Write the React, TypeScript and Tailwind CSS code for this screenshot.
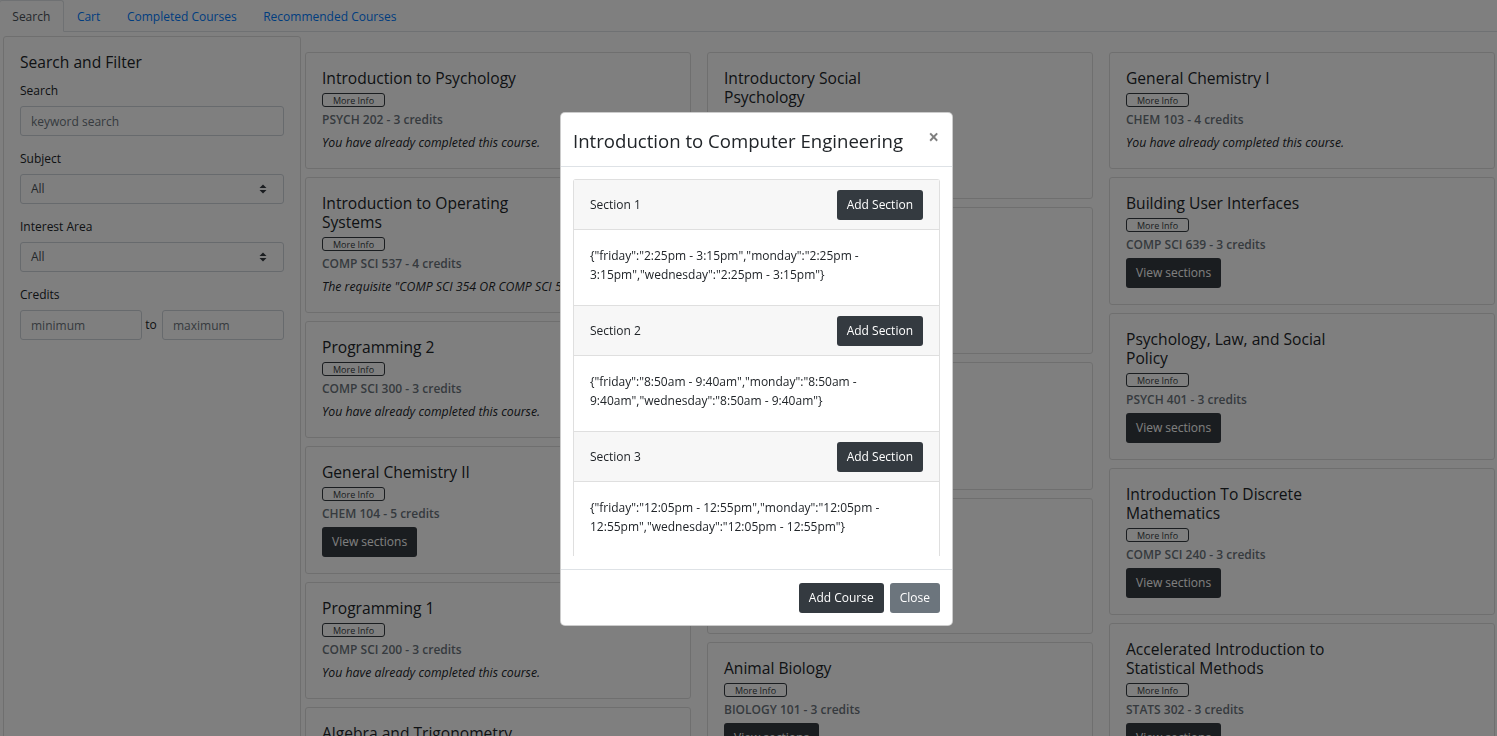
import { useState } from 'react';

type Course = {
  title: string[];
  code: string;
  note?: string;
  button?: boolean;
};

const COLUMNS: Course[][] = [
  [
    { title: ['Introduction to Psychology'], code: 'PSYCH 202 - 3 credits', note: 'You have already completed this course.' },
    {
      title: ['Introduction to Operating', 'Systems'],
      code: 'COMP SCI 537 - 4 credits',
      note: 'The requisite "COMP SCI 354 OR COMP SCI 552" has not been met.',
    },
    { title: ['Programming 2'], code: 'COMP SCI 300 - 3 credits', note: 'You have already completed this course.' },
    { title: ['General Chemistry II'], code: 'CHEM 104 - 5 credits', button: true },
    { title: ['Programming 1'], code: 'COMP SCI 200 - 3 credits', note: 'You have already completed this course.' },
    { title: ['Algebra and Trigonometry'], code: 'MATH 171 - 5 credits', button: true },
  ],
  [
    { title: ['Introductory Social', 'Psychology'], code: 'PSYCH 456 - 3 credits', button: true },
    { title: ['Introduction to Artificial', 'Intelligence'], code: 'COMP SCI 540 - 3 credits', button: true },
    { title: ['Data Structures'], code: 'COMP SCI 400 - 3 credits', button: true },
    {
      title: ['Introduction to Cognitive', 'Psychology'],
      code: 'PSYCH 414 - 3 credits',
      note: 'You have already completed this course.',
    },
    { title: ['Animal Biology'], code: 'BIOLOGY 101 - 3 credits', button: true },
  ],
  [
    { title: ['General Chemistry I'], code: 'CHEM 103 - 4 credits', note: 'You have already completed this course.' },
    { title: ['Building User Interfaces'], code: 'COMP SCI 639 - 3 credits', button: true },
    { title: ['Psychology, Law, and Social', 'Policy'], code: 'PSYCH 401 - 3 credits', button: true },
    { title: ['Introduction To Discrete', 'Mathematics'], code: 'COMP SCI 240 - 3 credits', button: true },
    { title: ['Accelerated Introduction to', 'Statistical Methods'], code: 'STATS 302 - 3 credits', button: true },
  ],
];

const SECTIONS = [
  {
    name: 'Section 1',
    times: ['{"friday":"2:25pm - 3:15pm","monday":"2:25pm -', '3:15pm","wednesday":"2:25pm - 3:15pm"}'],
  },
  {
    name: 'Section 2',
    times: ['{"friday":"8:50am - 9:40am","monday":"8:50am -', '9:40am","wednesday":"8:50am - 9:40am"}'],
  },
  {
    name: 'Section 3',
    times: ['{"friday":"12:05pm - 12:55pm","monday":"12:05pm -', '12:55pm","wednesday":"12:05pm - 12:55pm"}'],
  },
  {
    name: 'Section 4',
    times: ['{"friday":"1:20pm - 2:10pm","monday":"1:20pm -', '2:10pm","wednesday":"1:20pm - 2:10pm"}'],
  },
];

const TABS = ['Search', 'Cart', 'Completed Courses', 'Recommended Courses'];

const SelectArrows = () => (
  <svg width="8" height="10" viewBox="0 0 8 10" className="shrink-0">
    <path d="M4 0.5 L7.5 4 H0.5 Z" fill="#343a40" />
    <path d="M4 9.5 L7.5 6 H0.5 Z" fill="#343a40" />
  </svg>
);

const CourseCard = ({ course }: { course: Course }) => (
  <div className="rounded-[3px] border border-[#dfdfdf] bg-white p-4">
    <div className="text-[15.6px] font-medium leading-[19px] text-[#212529]">
      {course.title.map((line) => (
        <div key={line}>{line}</div>
      ))}
    </div>
    <div className="mt-[5px] flex">
      <button
        type="button"
        className="flex h-[14px] items-center rounded-[3px] border border-[#343a40] px-[10px] text-[9px] leading-none text-[#343a40]"
      >
        More Info
      </button>
    </div>
    <div className="mt-[5px] text-[12px] font-semibold leading-[15px] text-[#6c757d]">{course.code}</div>
    {course.note ? (
      <div className="mt-[6px] overflow-hidden whitespace-nowrap text-[12.3px] italic leading-[19px] text-[#212529]">
        {course.note}
      </div>
    ) : null}
    {course.button ? (
      <div className="mt-[6px] flex">
        <button type="button" className="h-[30px] rounded-[3px] bg-[#343a40] px-[10px] text-[12px] text-white">
          View sections
        </button>
      </div>
    ) : null}
  </div>
);

export default function App() {
  const [tab, setTab] = useState('Search');

  return (
    <div className="relative min-h-screen bg-white font-['Open_Sans',sans-serif] text-[12px] text-[#212529]">
      <nav className="-ml-px flex h-[32px] border-b border-[#dee2e6]">
        {TABS.map((label) => (
          <button
            key={label}
            type="button"
            onClick={() => setTab(label)}
            className={`-mb-px h-[32px] rounded-t-[3px] border px-[12.3px] text-[12px] leading-[19px] ${
              tab === label ? 'border-[#dee2e6] border-b-white bg-white text-[#495057]' : 'border-transparent text-[#007bff]'
            }`}
          >
            {label}
          </button>
        ))}
      </nav>

      <div className="flex items-start">
        <aside className="ml-[3px] mt-[4px] h-[720px] w-[298px] shrink-0 rounded-[3px] border border-[#dfdfdf] bg-white p-4">
          <div className="mb-[9px] text-[15.6px] font-medium leading-[19px]">Search and Filter</div>

          <div className="mb-[13px]">
            <div className="mb-[6px] leading-[19px]">Search</div>
            <input
              placeholder="keyword search"
              className="h-[30px] w-full rounded-[3px] border border-[#ced4da] px-[10px] text-[12px] text-[#495057] placeholder:text-[#6c757d] outline-none"
            />
          </div>

          <div className="mb-[13px]">
            <div className="mb-[6px] leading-[19px]">Subject</div>
            <div className="flex h-[30px] items-center justify-between rounded-[3px] border border-[#ced4da] pl-[10px] pr-[16px] text-[#495057]">
              <span>All</span>
              <SelectArrows />
            </div>
          </div>

          <div className="mb-[13px]">
            <div className="mb-[6px] leading-[19px]">Interest Area</div>
            <div className="flex h-[30px] items-center justify-between rounded-[3px] border border-[#ced4da] pl-[10px] pr-[16px] text-[#495057]">
              <span>All</span>
              <SelectArrows />
            </div>
          </div>

          <div>
            <div className="mb-[6px] leading-[19px]">Credits</div>
            <div className="flex items-center">
              <input
                placeholder="minimum"
                className="h-[30px] w-[122px] rounded-[3px] border border-[#ced4da] px-[10px] text-[12px] placeholder:text-[#6c757d] outline-none"
              />
              <span className="flex-1 pr-[2px] text-center">to</span>
              <input
                placeholder="maximum"
                className="h-[30px] w-[122px] rounded-[3px] border border-[#ced4da] px-[10px] text-[12px] placeholder:text-[#6c757d] outline-none"
              />
            </div>
          </div>
        </aside>

        <main className="ml-[4px] mt-[20px] flex items-start gap-4">
          {COLUMNS.map((column, index) => (
            <div key={index} className="flex w-[386px] flex-col gap-2">
              {column.map((course) => (
                <CourseCard key={course.code} course={course} />
              ))}
            </div>
          ))}
        </main>
      </div>

      <div className="fixed inset-0 bg-black/50">
        <div className="ml-[560px] mt-[112px] w-[393px] rounded-[5px] border border-black/20 bg-white">
          <div className="flex h-[54px] items-center border-b border-[#dee2e6] px-[12px]">
            <div className="pt-[2px] text-[18.6px] font-medium leading-[29px] text-[#212529]">
              Introduction to Computer Engineering
            </div>
            <span className="ml-auto mr-[1px] pb-[4px] text-[19px] font-bold leading-none text-black/50">×</span>
          </div>

          <div className="px-[12px] pb-[13px] pt-[12px]">
            <div className="h-[377px] overflow-hidden">
              <div className="rounded-t-[3px] border-x border-t border-[#dfdfdf]">
                {SECTIONS.map((section) => (
                  <div key={section.name}>
                    <div className="flex items-center justify-between border-b border-[#dfdfdf] bg-[#f7f7f7] pb-[9px] pl-[16px] pr-[16px] pt-[10px]">
                      <span>{section.name}</span>
                      <button type="button" className="h-[30px] rounded-[3px] bg-[#343a40] px-[10px] text-white">
                        Add Section
                      </button>
                    </div>
                    <div className="border-b border-[#dfdfdf] pb-[21px] pl-[16px] pt-[16px] leading-[19px]">
                      {section.times.map((line) => (
                        <div key={line}>{line}</div>
                      ))}
                    </div>
                  </div>
                ))}
              </div>
            </div>
          </div>

          <div className="flex justify-end gap-[6px] border-t border-[#dee2e6] px-[12px] pb-[12px] pt-[13px]">
            <button type="button" className="h-[30px] rounded-[3px] bg-[#343a40] px-[10px] text-white">
              Add Course
            </button>
            <button type="button" className="h-[30px] rounded-[3px] bg-[#6c757d] px-[10px] text-white">
              Close
            </button>
          </div>
        </div>
      </div>
    </div>
  );
}
